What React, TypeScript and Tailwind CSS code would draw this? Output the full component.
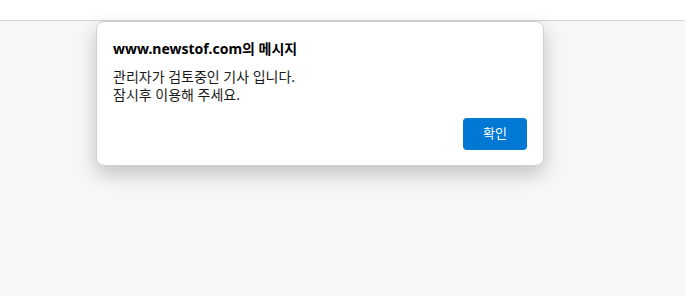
export default function App() {
  return (
    <div
      className="h-[296px] w-[685px] overflow-hidden bg-[#f7f7f7]"
      style={{ fontFamily: '"Noto Sans", "Noto Sans CJK KR", sans-serif' }}
    >
      <div className="h-[21px] border-b border-[#d6d6d6] bg-white" />
      <div className="pl-[96px]">
        <div className="w-[448px] h-[145px] rounded-[8px] border border-[#d0d0d0] bg-white shadow-[0_8px_20px_rgba(0,0,0,0.22)] px-[16px] pt-[17px] pb-[15px] flex flex-col">
          <div className="text-[14px] font-bold leading-[20px] text-black">
            www.newstof.com의 메시지
          </div>
          <div className="mt-[9px] text-[14px] leading-[18px] text-[#1a1a1a]">
            <div>관리자가 검토중인 기사 입니다.</div>
            <div>잠시후 이용해 주세요.</div>
          </div>
          <div className="mt-auto flex justify-end">
            <button className="w-[64px] h-[32px] rounded-[4px] bg-[#0078d4] text-white text-[13px]">
              확인
            </button>
          </div>
        </div>
      </div>
    </div>
  );
}
